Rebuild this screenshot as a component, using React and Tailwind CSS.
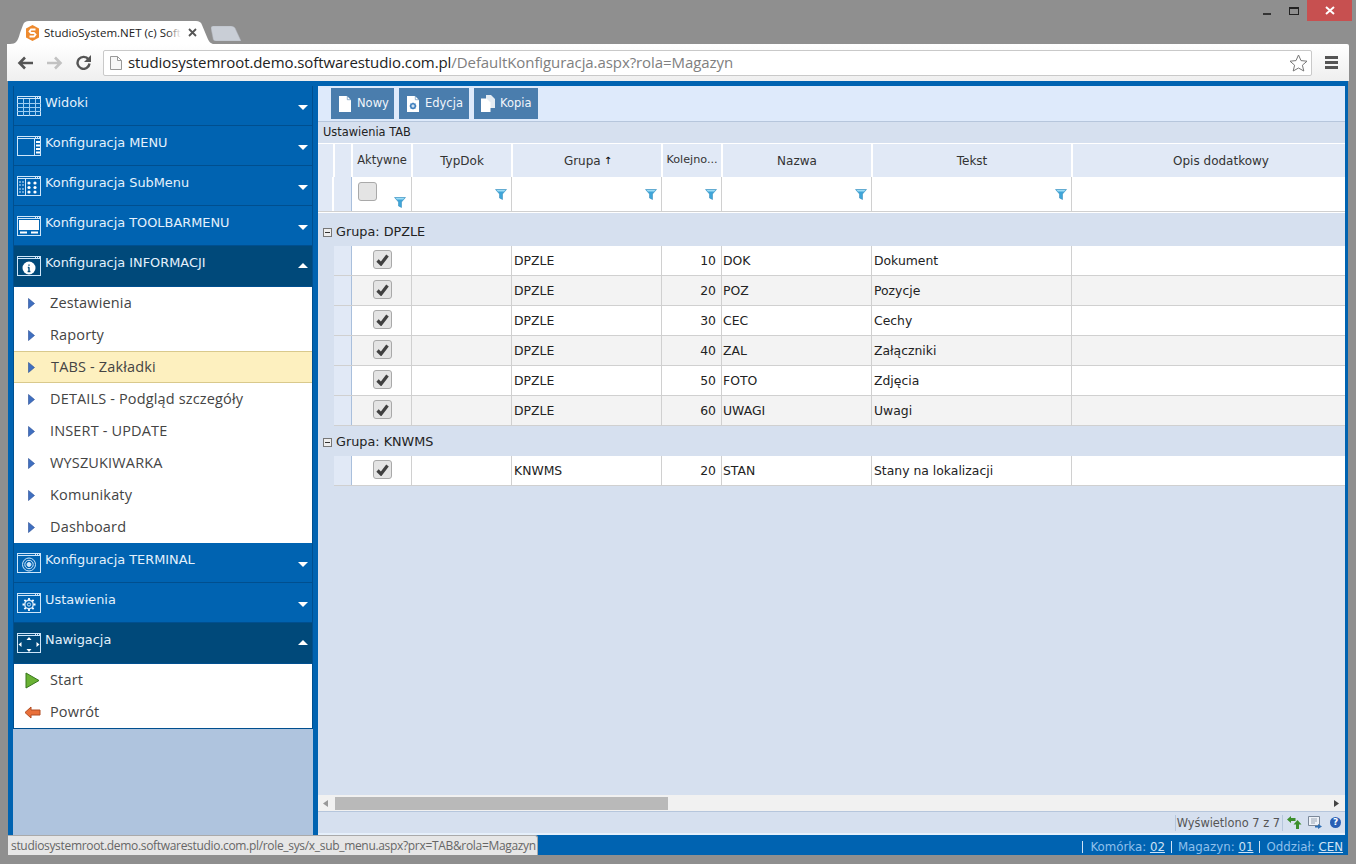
const dv = "font-['DejaVu_Sans',sans-serif]";
const ui = "font-['Open_Sans',sans-serif]";

function Frame({ children }) {
  return (
    <svg width="24" height="20" viewBox="0 0 24 20" className="shrink-0" fill="none" stroke="#cfe6fa" strokeWidth="1">
      <rect x="0.5" y="0.5" width="23" height="19" />
      <line x1="0.5" y1="2.5" x2="23.5" y2="2.5" />
      <line x1="18" y1="1.5" x2="23" y2="1.5" strokeDasharray="1 1" />
      {children}
    </svg>
  );
}
const icons = {
  grid: (
    <Frame>
      <path d="M0 7.5H24M0 11.5H24M0 15.5H24M6.5 3V20M12.5 3V20M18.5 3V20" stroke="#9ccdf2" />
    </Frame>
  ),
  menu: (
    <Frame>
      <line x1="17.5" y1="3" x2="17.5" y2="20" />
      <path d="M19 6H23M19 9.5H23M19 13H23M19 16.5H23" stroke="#fff" strokeWidth="2" />
    </Frame>
  ),
  sub: (
    <Frame>
      <line x1="8.5" y1="3" x2="8.5" y2="20" />
      <path d="M2 6H7M2 9H7M2 13H7M2 16H7" strokeDasharray="2 1" />
      <g fill="#fff" stroke="none">
        <circle cx="12" cy="7" r="1.6" /><circle cx="18" cy="7" r="1.6" />
        <circle cx="12" cy="11.5" r="1.6" /><circle cx="18" cy="11.5" r="1.6" />
        <circle cx="12" cy="16" r="1.6" /><circle cx="18" cy="16" r="1.6" />
      </g>
    </Frame>
  ),
  tool: (
    <Frame>
      <rect x="2" y="4" width="20" height="10" fill="#fff" stroke="none" />
      <path d="M3 16.5H10M14 16.5H21" stroke="#fff" strokeWidth="2" />
    </Frame>
  ),
  info: (
    <Frame>
      <circle cx="12" cy="12" r="6.5" fill="#fff" stroke="none" />
      <path d="M12 8.5V9.8M12 11.2V15.5M10.8 11.5H12.2M10.6 15.5H13.4" stroke="#004a78" strokeWidth="1.4" />
    </Frame>
  ),
  term: (
    <Frame>
      <circle cx="12" cy="11.5" r="6.5" />
      <circle cx="12" cy="11.5" r="4.2" />
      <circle cx="12" cy="11.5" r="2" fill="#cfe6fa" />
    </Frame>
  ),
  gear: (
    <Frame>
      <circle cx="12" cy="11.5" r="4.2" strokeWidth="1.4" />
      <circle cx="12" cy="11.5" r="1.6" />
      <path d="M12 5V7M12 16V18M5.5 11.5H7.5M16.5 11.5H18.5M7.4 6.9L8.8 8.3M15.2 14.7L16.6 16.1M7.4 16.1L8.8 14.7M15.2 8.3L16.6 6.9" strokeWidth="1.8" stroke="#fff" />
    </Frame>
  ),
  nav: (
    <Frame>
      <g fill="#fff" stroke="none">
        <path d="M12 4L9.5 7H14.5Z" />
        <path d="M12 19L9.5 16H14.5Z" />
        <path d="M1.5 11.5L4.5 9V14Z" />
        <path d="M22.5 11.5L19.5 9V14Z" />
      </g>
    </Frame>
  ),
};

function Arrow({ up }) {
  return (
    <svg width="10" height="5" viewBox="0 0 10 5" className="shrink-0" fill="#fff">
      <path d={up ? "M5 0L10 5H0Z" : "M0 0H10L5 5Z"} />
    </svg>
  );
}

function Head({ icon, label, open }) {
  return (
    <div className={`shrink-0 flex items-start pl-[3px] pr-[4px] border-b border-[#004f8f] ${open ? "h-[41px] bg-[#00497a]" : "h-[40px] bg-[#0063b1]"}`}>
      <div className="pt-[10px]">{icons[icon]}</div>
      <span className={`${dv} ml-[4px] mt-[9px] text-[12.9px] leading-[16px] text-[#e4f1fc] flex-1`}>{label}</span>
      <div className={open ? "pt-[17px]" : "pt-[19px]"}><Arrow up={open} /></div>
    </div>
  );
}

function Item({ label, active, icon }) {
  return (
    <div className={`h-[32px] flex items-center ${active ? "bg-[#fdf0bf] border-y border-[#d9c98c]" : "bg-white"}`}>
      <div className="w-[36px] flex justify-center shrink-0">
        {icon === "start" ? (
          <svg width="16" height="17" viewBox="0 0 16 17">
            <path d="M2 1L15 8.5L2 16Z" fill="#6ab234" stroke="#37761c" strokeLinejoin="round" />
          </svg>
        ) : icon === "back" ? (
          <svg width="17" height="13" viewBox="0 0 17 13">
            <path d="M1 6.5L7 1V4H16V9H7V12Z" fill="#e9703a" stroke="#b14c22" strokeLinejoin="round" />
          </svg>
        ) : (
          <svg width="7" height="11" viewBox="0 0 7 11" className="-ml-[1px]">
            <path d="M0.5 0.5L6.5 5.5L0.5 10.5Z" fill="#3f6fc0" stroke="#2a4f96" strokeWidth="0.6" />
          </svg>
        )}
      </div>
      <span className={`${ui} text-[14.5px] tracking-[0.15px] text-[#444] ${active ? "ml-[1px]" : ""}`}>{label}</span>
    </div>
  );
}

function Funnel() {
  return (
    <svg width="12" height="11" viewBox="0 0 12 11" className="shrink-0">
      <path d="M0.5 0.5H11.5L7.5 5V10.5L4.5 9V5Z" fill="#3fa5d8" stroke="#2b86b8" strokeWidth="0.5" />
      <path d="M1.5 1H10.5L9 2.5H3Z" fill="#9ddcf5" />
    </svg>
  );
}

function Check({ on }) {
  return (
    <div className="w-[19px] h-[19px] rounded-[3px] border border-[#a9a9a9] bg-[#e4e4e4] flex items-center justify-center">
      {on && (
        <svg width="13" height="12" viewBox="0 0 13 12" fill="none">
          <path d="M1.5 6.5L5 10L11.5 1.5" stroke="#404040" strokeWidth="3.2" />
        </svg>
      )}
    </div>
  );
}

function HCell({ w, children, cls = "" }) {
  return (
    <div className={`${w} shrink-0 h-full border-r-2 border-white flex items-center justify-center text-[#333] ${cls}`}>{children}</div>
  );
}

function FCell({ w, funnel }) {
  return (
    <div className={`${w} shrink-0 h-full border-r border-[#d0d0d0] bg-white flex items-center justify-end pr-[4px]`}>
      {funnel && <Funnel />}
    </div>
  );
}

function Row({ grupa, no, nazwa, tekst, alt }) {
  const bg = alt ? "bg-[#f3f3f3]" : "bg-white";
  return (
    <div className={`h-[30px] flex ml-[16px] border-b border-[#d0d0d0] ${bg} text-[12.4px] text-[#222]`}>
      <div className="w-[18px] shrink-0 bg-[#e1e9f6] border-r border-[#a9bfdc]" />
      <div className="w-[60px] shrink-0 border-r border-[#d0d0d0] flex items-center justify-center pl-[1px] pb-[2px]"><Check on /></div>
      <div className="w-[100px] shrink-0 border-r border-[#d0d0d0]" />
      <div className="w-[150px] shrink-0 border-r border-[#d0d0d0] flex items-center pl-[2px] pt-[1px]">{grupa}</div>
      <div className="w-[60px] shrink-0 border-r border-[#d0d0d0] flex items-center justify-end pr-[5px] pt-[1px]">{no}</div>
      <div className="w-[150px] shrink-0 border-r border-[#d0d0d0] flex items-center pl-[1px] pt-[1px]">{nazwa}</div>
      <div className="w-[200px] shrink-0 border-r border-[#d0d0d0] flex items-center pl-[2px] pt-[1px]">{tekst}</div>
      <div className="flex-1" />
    </div>
  );
}

function Group({ label }) {
  return (
    <div className="h-[30px] flex items-center pl-[5px] pt-[1px] text-[12.8px] text-[#222]">
      <div className="w-[9px] h-[9px] border border-[#777] bg-[#eee] flex items-center justify-center mr-[4px] mt-[1px]">
        <div className="w-[5px] h-[1px] bg-[#333]" />
      </div>
      {label}
    </div>
  );
}

function Btn({ label, w, kind }) {
  return (
    <div className={`${w} h-[31px] bg-[#4a7dad] flex items-center text-[11.5px] text-[#f2f6fb] ${kind === "copy" ? "pl-[7px] gap-[5px]" : "pl-[8px] gap-[6px]"}`}>
      {kind === "copy" ? (
        <svg width="14" height="17" viewBox="0 0 14 17" fill="#fff">
          <path d="M5 0H10L14 4V13H5Z" opacity="0.85" />
          <path d="M0 3.5H5.5L9.5 7.5V17H0Z" />
        </svg>
      ) : (
        <svg width="12" height="16" viewBox="0 0 12 16" fill="#fff">
          <path d="M0 0H8L12 4V16H0Z" />
          <path d="M8.3 0V3.7H12" fill="none" stroke="#4a7dad" strokeWidth="0.6" />
          {kind === "edit" && (
            <>
              <circle cx="6" cy="10" r="2.4" fill="none" stroke="#3d7fbe" strokeWidth="1.4" />
              <path d="M6 6.5V13.5M2.5 10H9.5M3.6 7.6L8.4 12.4M8.4 7.6L3.6 12.4" stroke="#3d7fbe" strokeWidth="0.8" />
              <circle cx="6" cy="10" r="1" fill="#fff" />
            </>
          )}
        </svg>
      )}
      <span>{label}</span>
    </div>
  );
}

export default function App() {
  const first = ["Zestawienia", "Raporty", "TABS - Zakładki", "DETAILS - Podgląd szczegóły", "INSERT - UPDATE", "WYSZUKIWARKA", "Komunikaty", "Dashboard"];
  const rows = [
    ["10", "DOK", "Dokument"],
    ["20", "POZ", "Pozycje"],
    ["30", "CEC", "Cechy"],
    ["40", "ZAL", "Załączniki"],
    ["50", "FOTO", "Zdjęcia"],
    ["60", "UWAGI", "Uwagi"],
  ];
  return (
    <div className={`relative w-[1356px] h-[864px] overflow-hidden bg-[#8f8f8f] flex flex-col ${dv}`}>
      {/* title bar */}
      <div className="h-[44px] shrink-0 flex justify-between items-start">
        <div className="pl-[10px] pt-[21px] flex items-end">
          <div className="relative w-[204px] h-[23px] flex items-center pl-[16px]">
            <svg width="204" height="23" viewBox="0 0 204 23" className="absolute inset-0">
              <path d="M0 23C6 23 8 20 10 12L13 4C14 1 16 0 19 0H186C189 0 191 1 192 4L197 16C199 21 201 23 204 23Z" fill="#fff" />
            </svg>
            <svg width="13" height="16" viewBox="0 0 13 16" className="relative shrink-0">
              <path d="M6.5 0L13 3.5V12.5L6.5 16L0 12.5V3.5Z" fill="#ee8a2e" />
              <path d="M9.5 4.5H5L3.5 6.5L5 8H8L9.5 9.5L8 11.5H3.5" fill="none" stroke="#fff" strokeWidth="1.8" />
            </svg>
            <div className={`${ui} relative ml-[5px] w-[137px] overflow-hidden text-[11.5px] text-[#222]`}>
              <span className="block w-[137px] h-[16px] leading-[16px] overflow-hidden break-all">StudioSystem.NET (c) Soft</span>
              <div className="absolute right-0 top-0 bottom-0 w-[14px] bg-gradient-to-r from-transparent to-white" />
            </div>
            <svg width="9" height="9" viewBox="0 0 9 9" className="relative ml-[7px]" stroke="#555" strokeWidth="1.8">
              <path d="M1 1L8 8M8 1L1 8" />
            </svg>
          </div>
          <svg width="30" height="15" viewBox="0 0 30 15" className="-ml-[3px] mb-[3px]">
            <path d="M0 2C0 1 1 0 2 0H20C22 0 23 1 24 2L30 15H5C3 15 2 14 2 12Z" fill="#c9ced6" stroke="#aeb3ba" strokeWidth="0.5" />
          </svg>
        </div>
        <div className="flex items-start pr-[4px]">
          <div className="w-[8px] h-[2px] bg-[#333] mt-[13px] mr-[18px]" />
          <div className="w-[10px] h-[8px] border border-[#222] border-t-2 mt-[7px] mr-[8px]" />
          <div className="w-[45px] h-[21px] bg-[#c75050] flex items-center justify-center">
            <svg width="10" height="9" viewBox="0 0 10 9" stroke="#fff" strokeWidth="2">
              <path d="M1 1L9 8M9 1L1 8" />
            </svg>
          </div>
        </div>
      </div>

      {/* browser toolbar */}
      <div className="mx-[7px] h-[37px] shrink-0 bg-gradient-to-b from-white to-[#efefef] flex items-center rounded-tr-[2px]">
        <svg width="16" height="14" viewBox="0 0 16 14" className="ml-[10px]" fill="none" stroke="#555" strokeWidth="2.6">
          <path d="M16 7H3M8 1.5L2.5 7L8 12.5" />
        </svg>
        <svg width="16" height="14" viewBox="0 0 16 14" className="ml-[14px]" fill="none" stroke="#c2c2c2" strokeWidth="2.6">
          <path d="M0 7H13M8 1.5L13.5 7L8 12.5" />
        </svg>
        <svg width="15" height="15" viewBox="0 0 15 15" className="ml-[13px]" fill="none" stroke="#555" strokeWidth="2.4">
          <path d="M12.5 4.5A6 6 0 1 0 13.5 8.5" />
          <path d="M15 0V7H8Z" fill="#555" stroke="none" />
        </svg>
        <div className="ml-[12px] w-[1209px] h-[26px] bg-white border border-[#c9c9c9] rounded-[2px] flex items-center pl-[6px] pr-[2px]">
          <svg width="12" height="14" viewBox="0 0 12 14" fill="#f7f7f7" stroke="#999">
            <path d="M0.5 0.5H7.5L11.5 4.5V13.5H0.5ZM7.5 0.5V4.5H11.5" />
          </svg>
          <div className={`${ui} ml-[6px] text-[15px] tracking-[-0.08px] flex-1 whitespace-nowrap`}>
            <span className="text-[#222]">studiosystemroot.demo.softwarestudio.com.pl</span>
            <span className="text-[#808080]">/DefaultKonfiguracja.aspx?rola=Magazyn</span>
          </div>
          <svg width="19" height="18" viewBox="0 0 19 18" fill="#fff" stroke="#777" className="mr-[1px]">
            <path d="M9.5 1L12 6.6L18 7.2L13.4 11.2L14.8 17L9.5 14L4.2 17L5.6 11.2L1 7.2L7 6.6Z" />
          </svg>
        </div>
        <div className="ml-[13px] w-[13px] flex flex-col gap-[2px]">
          <div className="h-[3px] bg-[#555]" />
          <div className="h-[3px] bg-[#555]" />
          <div className="h-[3px] bg-[#555]" />
        </div>
      </div>

      {/* page */}
      <div className="ml-[8px] mr-[8px] h-[774px] shrink-0 bg-[#0063b1] flex flex-col">
        <div className="h-[754px] flex pt-[5px] pl-[5px] pr-[3px]">
          {/* sidebar */}
          <div className="w-[300px] shrink-0 bg-[#afc4de] -mb-[1px] flex flex-col">
            <div className="flex flex-col border-l border-r border-[#004f8f]">
              <Head icon="grid" label="Widoki" />
              <Head icon="menu" label="Konfiguracja MENU" />
              <Head icon="sub" label="Konfiguracja SubMenu" />
              <Head icon="tool" label="Konfiguracja TOOLBARMENU" />
              <Head icon="info" label="Konfiguracja INFORMACJI" open />
              <div className="bg-white">
                {first.map((l, i) => (
                  <Item key={l} label={l} active={i === 2} />
                ))}
              </div>
              <Head icon="term" label="Konfiguracja TERMINAL" />
              <Head icon="gear" label="Ustawienia" />
              <Head icon="nav" label="Nawigacja" open />
              <div className="bg-white border-b border-[#004f8f]">
                <Item label="Start" icon="start" />
                <Item label="Powrót" icon="back" />
              </div>
            </div>
          </div>

          {/* main */}
          <div className="ml-[5px] flex-1 min-w-0 bg-[#d6e0ef] flex flex-col text-[12px]">
            <div className="h-[36px] shrink-0 bg-[#deeafb] border-b border-[#b6c6dc] flex items-start pt-[2px] pl-[13px] gap-[5px]">
              <Btn label="Nowy" w="w-[63px]" kind="new" />
              <Btn label="Edycja" w="w-[70px]" kind="edit" />
              <Btn label="Kopia" w="w-[64px]" kind="copy" />
            </div>
            <div className="h-[21px] shrink-0 pl-[5px] flex items-center text-[11.4px] text-[#222]">Ustawienia TAB</div>
            <div className="h-[34px] shrink-0 flex bg-[#e1e9f6] border-t border-white overflow-hidden">
              <HCell w="w-[17px]" />
              <HCell w="w-[18px]" />
              <HCell w="w-[60px]"><span className="text-[11.5px]">Aktywne</span></HCell>
              <HCell w="w-[100px]">TypDok</HCell>
              <HCell w="w-[150px]"><span className="ml-[2px]">Grupa</span><span className="ml-[3px] text-black text-[10px]">↑</span></HCell>
              <HCell w="w-[60px]"><span className="text-[11.2px]">Kolejno...</span></HCell>
              <HCell w="w-[150px]">Nazwa</HCell>
              <HCell w="w-[200px]">Tekst</HCell>
              <div className="w-[296px] shrink-0 flex items-center justify-center text-[#333]">Opis dodatkowy</div>
            </div>
            <div className="h-[35px] shrink-0 flex border-b border-[#d0d0d0] bg-[#e1e9f6]">
              <div className="w-[16px] shrink-0 border-r-2 border-white" />
              <div className="w-[18px] shrink-0 border-r border-[#a9bfdc]" />
              <div className="w-[60px] shrink-0 border-r border-[#d0d0d0] bg-white relative pl-[6px] pt-[5px]">
                <Check />
                <div className="absolute left-[42px] top-[20px]"><Funnel /></div>
              </div>
              <FCell w="w-[100px]" funnel />
              <FCell w="w-[150px]" funnel />
              <FCell w="w-[60px]" funnel />
              <FCell w="w-[150px]" funnel />
              <FCell w="w-[200px]" funnel />
              <div className="flex-1 bg-white" />
            </div>
            <div className="h-[4px] shrink-0 border-t border-white bg-[#d6e0ef]" />
            <div className="flex-1 min-h-0">
              <Group label="Grupa: DPZLE" />
              {rows.map((r, i) => (
                <Row key={r[1]} grupa="DPZLE" no={r[0]} nazwa={r[1]} tekst={r[2]} alt={i % 2 === 1} />
              ))}
              <Group label="Grupa: KNWMS" />
              <Row grupa="KNWMS" no="20" nazwa="STAN" tekst="Stany na lokalizacji" />
            </div>
            <div className="h-[16px] shrink-0 bg-[#f1f1f1] flex items-center">
              <svg width="5" height="7" viewBox="0 0 5 7" className="ml-[5px]" fill="#999"><path d="M5 0V7L0 3.5Z" /></svg>
              <div className="ml-[7px] w-[333px] h-[13px] bg-[#b9b9b9]" />
              <div className="flex-1" />
              <svg width="5" height="7" viewBox="0 0 5 7" className="mr-[6px]" fill="#444"><path d="M0 0V7L5 3.5Z" /></svg>
            </div>
            <div className="h-[24px] shrink-0 border-t border-[#b6c6dc] flex items-center justify-end border-b-2 border-b-[#e6f0fb]">
              <div className="h-[16px] border-l border-r border-[#b6c6dc] pl-[1px] pr-[2px] text-[11.4px] leading-[16px] text-[#555]">Wyświetlono 7 z 7</div>
              <svg width="15" height="13" viewBox="0 0 15 13" className="ml-[4px]" fill="#3c8f2c">
                <path d="M0 3.5L4 0V2H8.5V5H4V7Z" />
                <path d="M10.5 4L14.5 8.5H12V13H9V8.5H6.5Z" />
              </svg>
              <svg width="14" height="13" viewBox="0 0 14 13" className="ml-[6px]" fill="#eef2f8" stroke="#7b8899">
                <path d="M0.5 0.5H11.5V9.5H0.5Z" />
                <path d="M3 3H9M3 5H9M3 7H7" stroke="#9aa6b5" />
                <path d="M7 10H10V8L14 10.5L10 13V11.5H7Z" fill="#2e6fb5" stroke="none" />
              </svg>
              <div className="ml-[8px] mr-[4px] w-[11px] h-[11px] rounded-full bg-[#2a5fb5] text-white text-[9px] leading-[11px] text-center font-bold">?</div>
            </div>
          </div>
        </div>

        {/* status */}
        <div className="h-[20px] shrink-0 flex items-center justify-end pr-[5px] pt-[3px] text-[11.8px] text-[#8fc0ec]">
          <span className="border-l border-[#cfe3f6] pl-[7px] leading-[12px]">Komórka: <span className="underline text-[#cfe3f6]">02</span></span>
          <span className="ml-[6px] border-l border-[#cfe3f6] pl-[6px] leading-[12px]">Magazyn: <span className="underline text-[#cfe3f6]">01</span></span>
          <span className="ml-[6px] border-l border-[#cfe3f6] pl-[6px] leading-[12px]">Oddział: <span className="underline text-[#cfe3f6]">CEN</span></span>
        </div>
      </div>

      {/* link hover bubble */}
      <div className="absolute left-[8px] top-[835px] w-[530px] h-[20px] bg-[#e6e6e6] border-t border-r border-[#aaa] rounded-tr-[3px] pl-[3px] text-[12px] tracking-[-0.32px] leading-[19px] text-[#666] whitespace-nowrap font-['Open_Sans',sans-serif]">
        studiosystemroot.demo.softwarestudio.com.pl/role_sys/x_sub_menu.aspx?prx=TAB&amp;rola=Magazyn
      </div>
    </div>
  );
}
